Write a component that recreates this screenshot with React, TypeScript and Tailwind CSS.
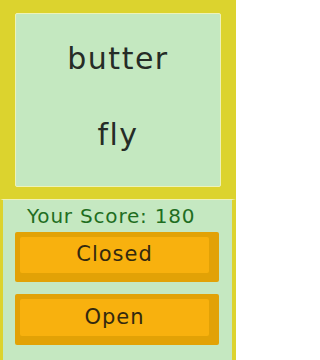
export default function App() {
  const font = { fontFamily: '"DejaVu Sans", "Noto Sans", sans-serif' };
  return (
    <div className="flex h-[360px] w-[236px] flex-col overflow-hidden bg-[#c5e8c1]" style={font}>
      <div className="bg-[#dcd32e] px-[15px] pb-[12px] pt-[13px]">
        <div className="flex h-[174px] flex-col items-center rounded-[2px] border border-[#eef2b8] bg-[#c4e8c0] text-[#262c26]">
          <p className="mt-[28px] text-[30px] leading-[34px] tracking-[1.5px]">butter</p>
          <p className="mt-[42px] text-[30px] leading-[34px] tracking-[1.5px]">fly</p>
        </div>
      </div>
      <div className="flex flex-1 flex-col border-l-[3px] border-r-[4px] border-t border-[#dcd32e] border-t-[#eef2b8] px-[12px]">
        <p className="mt-[4px] pl-[12px] text-[20px] leading-[24px] tracking-[0.8px] text-[#1f6e1f]">Your Score: 180</p>
        <button className="mt-[4px] h-[50px] w-[204px] rounded-[2px] bg-[#e2a206] pb-[9px] pl-[5px] pr-[10px] pt-[5px]">
          <span className="flex h-full w-full items-center justify-center rounded-[2px] bg-[#f8b10e] text-[21px] tracking-[1px] text-[#33290f]">
            Closed
          </span>
        </button>
        <button className="mt-[12px] h-[51px] w-[204px] rounded-[2px] bg-[#e2a206] pb-[9px] pl-[5px] pr-[10px] pt-[5px]">
          <span className="flex h-full w-full items-center justify-center rounded-[2px] bg-[#f8b10e] text-[21px] tracking-[1px] text-[#33290f]">
            Open
          </span>
        </button>
      </div>
    </div>
  );
}
